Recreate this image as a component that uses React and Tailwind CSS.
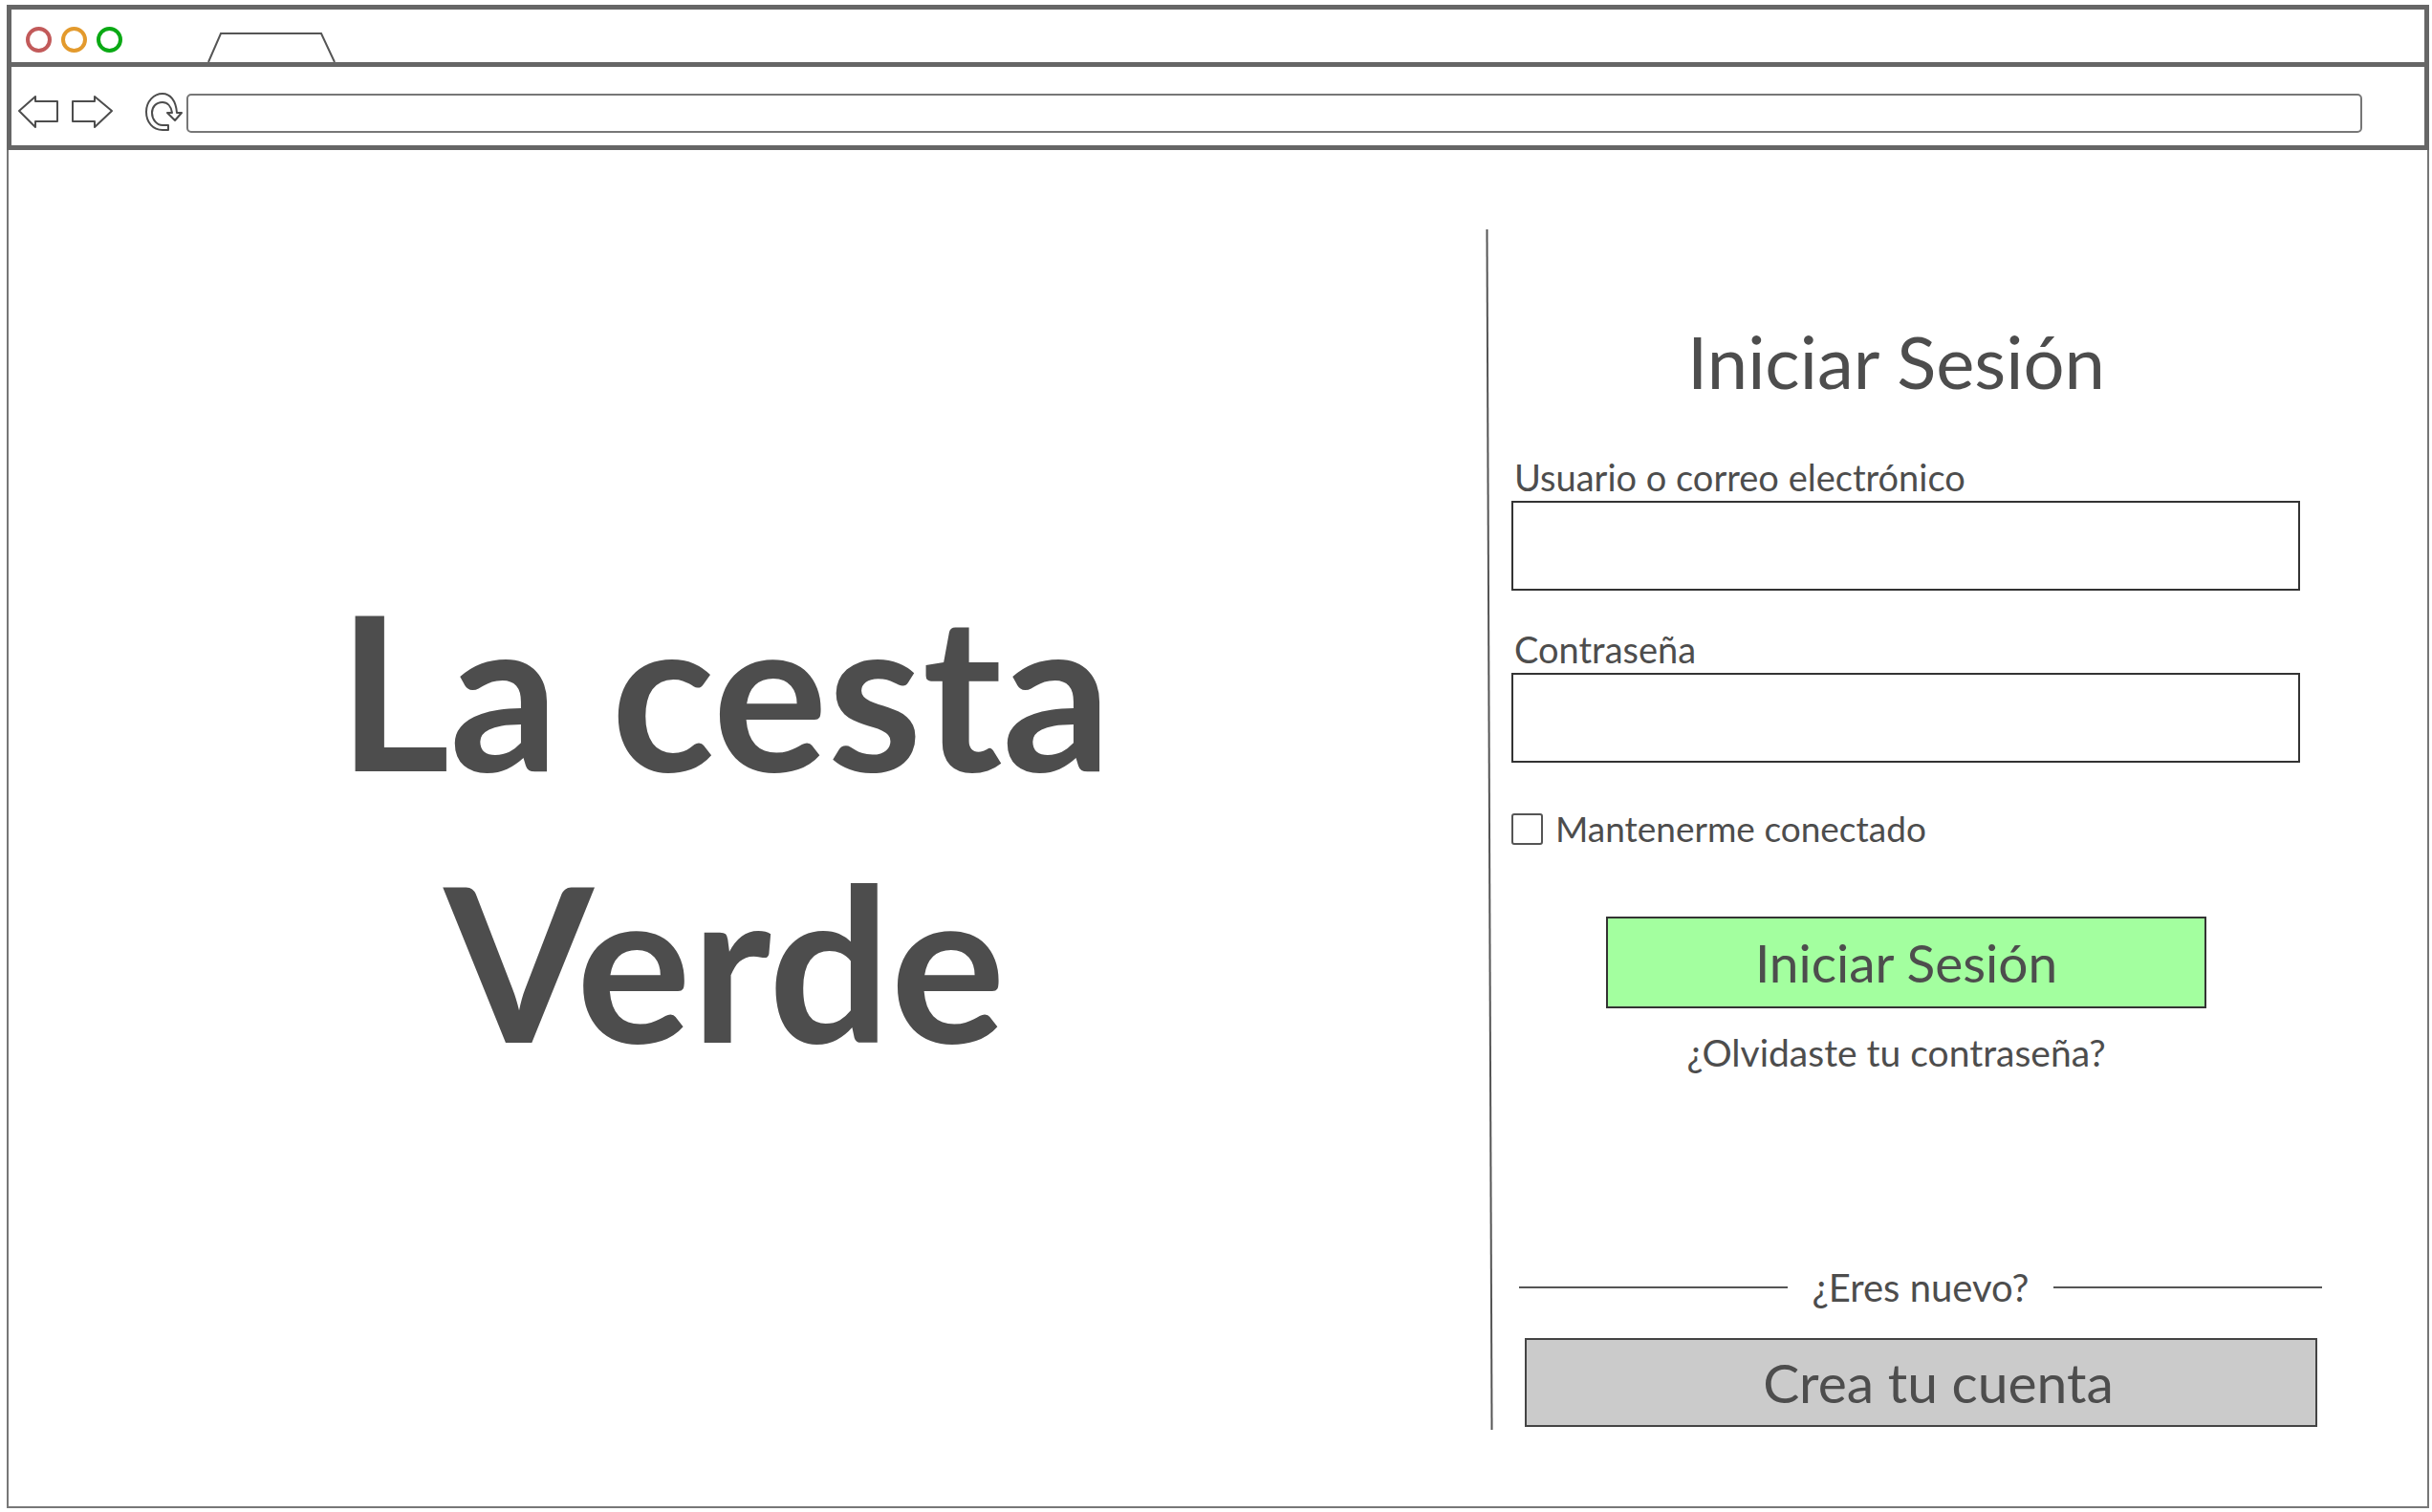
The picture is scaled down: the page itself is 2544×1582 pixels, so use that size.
import React from "react";

function WindowDots() {
    return (
        <div className="flex items-center gap-[10px] pl-[15px] pt-[7px]">
            <span className="size-[27px] rounded-full border-4 border-[#c25a5a]"></span>
            <span className="size-[27px] rounded-full border-4 border-[#e39a2d]"></span>
            <span className="size-[27px] rounded-full border-4 border-[#0aa914]"></span>
        </div>
    );
}

function TabShape() {
    return (
        <svg width="136" height="31" viewBox="0 0 136 31" fill="none" stroke="#555" strokeWidth="2" className="ml-[89px] self-end">
            <path d="M1 31 14 1h105l14 30" />
        </svg>
    );
}

function NavIcons() {
    return (
        <svg width="183" height="50" viewBox="0 0 183 50" fill="none" stroke="#4d4d4d" strokeWidth="2" strokeLinejoin="round" className="shrink-0">
            <path d="M8 23 25 8v5h23v21H25v6Z" />
            <path d="M64 13h23V8l18 15-18 17v-6H64Z" />
            <path d="M164 43h-6c-10 0-17-8-17-19s8-19 17-19c8 0 14 7 15 20h5l-7 8-8-8h5c-1-7-5-11-10-11-7 0-11 5-11 11 0 7 5 13 11 13h6Z" />
        </svg>
    );
}

function Field({ label, className }) {
    return (
        <div className={className}>
            <label className="block pl-[3px] text-[38px] leading-[46px] text-[#4d4d4d]">{label}</label>
            <div className="mt-[2px] h-[94px] w-[825px] border-2 border-[#333] bg-white"></div>
        </div>
    );
}

export default function App() {
    return (
        <div className="h-[1582px] w-[2544px] bg-white pl-[7px] pr-[3px] pt-[5px] font-['Lato',sans-serif] text-[#4d4d4d]">
            {/* Browser chrome */}
            <header className="border-[5px] border-[#666]">
                <div className="flex h-[55px] items-center">
                    <WindowDots />
                    <TabShape />
                </div>
                <div className="flex h-[87px] items-center border-t-[5px] border-[#666] pt-[14px]">
                    <NavIcons />
                    <div className="h-[41px] w-[2276px] rounded-[5px] border-2 border-[#777]"></div>
                </div>
            </header>

            <main className="flex h-[1421px] border-x-2 border-b-2 border-[#777] pb-[80px] pt-[83px]">
                {/* Brand */}
                <section className="flex w-[1548px] shrink-0 items-center justify-center pb-[12px] pr-[50px]">
                    <h1 className="w-[900px] text-center text-[225px] font-bold leading-[284px]">
                        La cesta<br />Verde
                    </h1>
                </section>

                <div className="w-[2px] shrink-0 -rotate-[0.23deg] bg-[#555]"></div>

                {/* Login */}
                <section className="flex w-[900px] flex-col pl-[22px]">
                    <h2 className="mt-[88px] w-[805px] text-center text-[76px] leading-[100px]">Iniciar Sesión</h2>
                    <Field label="Usuario o correo electrónico" className="mt-[48px]" />
                    <Field label="Contraseña" className="mt-[38px]" />

                    <div className="mt-[49px] flex items-center gap-[13px]">
                        <span className="size-[33px] rounded-[3px] border-2 border-[#555]"></span>
                        <span className="text-[37px] leading-[40px]">Mantenerme conectado</span>
                    </div>

                    <button className="ml-[99px] mt-[72px] h-[96px] w-[628px] border-2 border-[#333] bg-[#a3ff9f] text-[55px] text-[#4d4d4d]">
                        Iniciar Sesión
                    </button>
                    <p className="mt-[23px] w-[805px] text-center text-[39px] leading-[46px]">¿Olvidaste tu contraseña?</p>

                    <div className="ml-[8px] mt-[200px] flex w-[840px] items-center justify-between">
                        <span className="h-[2px] w-[281px] bg-[#555]"></span>
                        <span className="text-[40px] leading-[46px]">¿Eres nuevo?</span>
                        <span className="h-[2px] w-[281px] bg-[#555]"></span>
                    </div>

                    <button className="ml-[14px] mt-[30px] h-[93px] w-[829px] border-2 border-[#444] bg-[#cbcbcb] pl-[36px] text-[57px] text-[#4d4d4d]">
                        Crea tu cuenta
                    </button>
                </section>
            </main>
        </div>
    );
}
